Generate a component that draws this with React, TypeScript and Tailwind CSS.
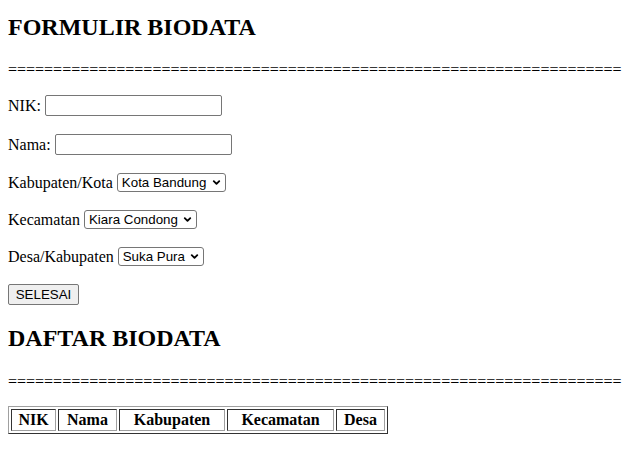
import { ChevronDown } from "lucide-react";

const line = "=".repeat(68);

function Select({ value, width }: { value: string; width: string }) {
  return (
    <div
      className={`${width} h-[19px] flex items-center justify-between border border-[#767676] rounded-[3px] bg-white pl-[4px] pr-[3px] font-['Liberation_Sans'] text-[13.33px] text-black`}
    >
      <span>{value}</span>
      <ChevronDown className="w-[11px] h-[11px]" strokeWidth={4} />
    </div>
  );
}

function Field({ label, children, top }: { label: string; children: React.ReactNode; top: string }) {
  return (
    <div className={`flex items-center gap-[4px] ${top}`}>
      <span>{label}</span>
      {children}
    </div>
  );
}

export default function App() {
  const heads = [
    { text: "NIK", w: "w-[45px]" },
    { text: "Nama", w: "w-[59px]" },
    { text: "Kabupaten", w: "w-[106px]" },
    { text: "Kecamatan", w: "w-[107px]" },
    { text: "Desa", w: "w-[49px]" },
  ];

  return (
    <div className="min-h-screen bg-white px-2 font-['Liberation_Serif',serif] text-[16px] leading-[18px] text-black">
      <h2 className="pt-[13px] text-[24px] font-bold leading-[28px]">FORMULIR BIODATA</h2>
      <p className="mt-[20px] whitespace-nowrap">{line}</p>

      <form className="flex flex-col">
        <Field label="NIK:" top="mt-[15px] h-[23px]">
          <input className="w-[177px] h-[21px] border border-[#767676] rounded-[2px] px-[2px] outline-none" />
        </Field>
        <Field label="Nama:" top="mt-[16px] h-[23px]">
          <input className="w-[177px] h-[21px] border border-[#767676] rounded-[2px] px-[2px] outline-none" />
        </Field>
        <Field label="Kabupaten/Kota" top="mt-[16px] h-[21px]">
          <Select value="Kota Bandung" width="w-[109px]" />
        </Field>
        <Field label="Kecamatan" top="mt-[16px] h-[21px]">
          <Select value="Kiara Condong" width="w-[113px]" />
        </Field>
        <Field label="Desa/Kabupaten" top="mt-[16px] h-[21px]">
          <Select value="Suka Pura" width="w-[86px]" />
        </Field>
        <div className="mt-[17px] h-[21px] flex items-center">
          <button
            type="button"
            className="h-[21px] w-[71px] border border-[#767676] rounded-[2px] bg-[#efefef] font-['Liberation_Sans'] text-[13.33px] text-black"
          >
            SELESAI
          </button>
        </div>
      </form>

      <h2 className="mt-[19px] text-[24px] font-bold leading-[28px]">DAFTAR BIODATA</h2>
      <p className="mt-[21px] whitespace-nowrap">{line}</p>

      <table className="mt-[15px] border-separate border-spacing-[2px] border border-t-[#a0a0a0] border-l-[#a0a0a0] border-r-[#333] border-b-[#333]">
        <thead>
          <tr>
            {heads.map((h) => (
              <th
                key={h.text}
                className={`${h.w} p-[1px] font-bold leading-[18px] text-center border border-t-[#333] border-l-[#333] border-r-[#a0a0a0] border-b-[#a0a0a0]`}
              >
                {h.text}
              </th>
            ))}
          </tr>
        </thead>
      </table>
    </div>
  );
}
